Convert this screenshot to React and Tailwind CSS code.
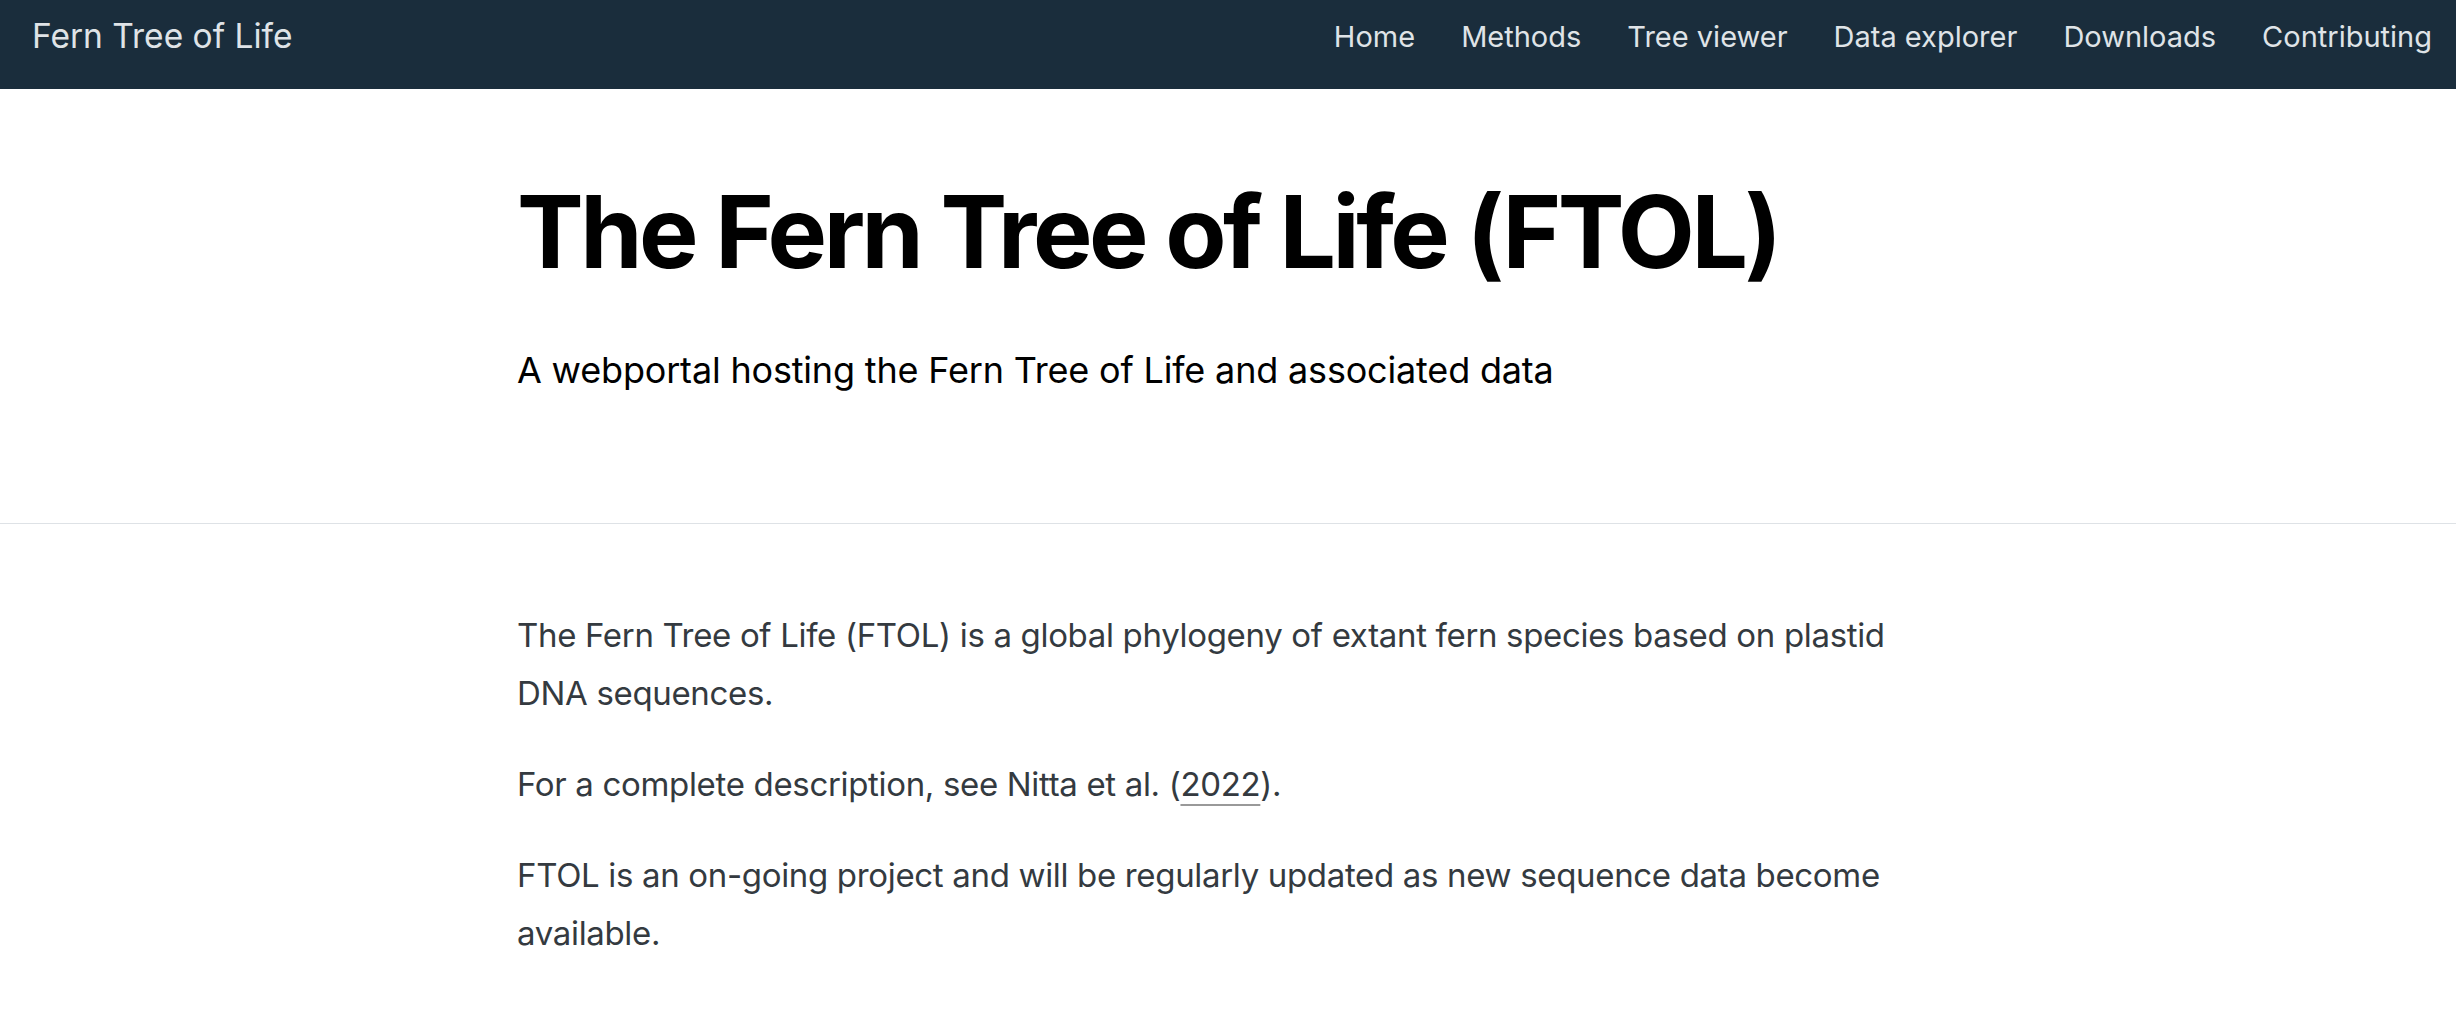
import React from 'react';

const navLinks = ['Home', 'Methods', 'Tree viewer', 'Data explorer', 'Downloads', 'Contributing'];

const Navbar = () => (
    <nav className="h-[89px] bg-[#1a2d3c] flex items-start justify-between pl-[32px] pr-[24px]">
        <a href="#" className="text-[33.5px] leading-none text-[#dfe3e7] pt-[20px]">Fern Tree of Life</a>
        <ul className="flex gap-[46px] pt-[22px]">
            {navLinks.map(link => (
                <li key={link}>
                    <a href="#" className="text-[29px] leading-none text-[#dfe3e7]">{link}</a>
                </li>
            ))}
        </ul>
    </nav>
);

const App = () => {
    return (
        <div className="min-h-screen bg-white font-['Inter','Noto_Sans',sans-serif]">
            <Navbar />

            <header className="border-b border-[#dee2e6]">
                <div className="w-[1422px] mx-auto pt-[83px] pb-[126px]">
                    <h1 className="text-[100px] leading-[1.2] font-bold text-black tracking-[-0.035em]">The Fern Tree of Life (FTOL)</h1>
                    <p className="mt-[51px] text-[36px] leading-[54px] text-black tracking-[-0.005em]">A webportal hosting the Fern Tree of Life and associated data</p>
                </div>
            </header>

            <main className="w-[1422px] mx-auto pt-[82px] pb-10 text-[33px] leading-[58px] text-[#343a40] tracking-[-0.01em]">
                <p className="mb-[33px]">The Fern Tree of Life (FTOL) is a global phylogeny of extant fern species based on plastid DNA sequences.</p>
                <p className="mb-[33px]">
                    For a complete description, see Nitta et al. (<a href="#" className="underline decoration-[#999] decoration-2 underline-offset-[8px]">2022</a>).
                </p>
                <p className="mb-[33px]">FTOL is an on-going project and will be regularly updated as new sequence data become available.</p>
            </main>
        </div>
    );
};

export default App;
